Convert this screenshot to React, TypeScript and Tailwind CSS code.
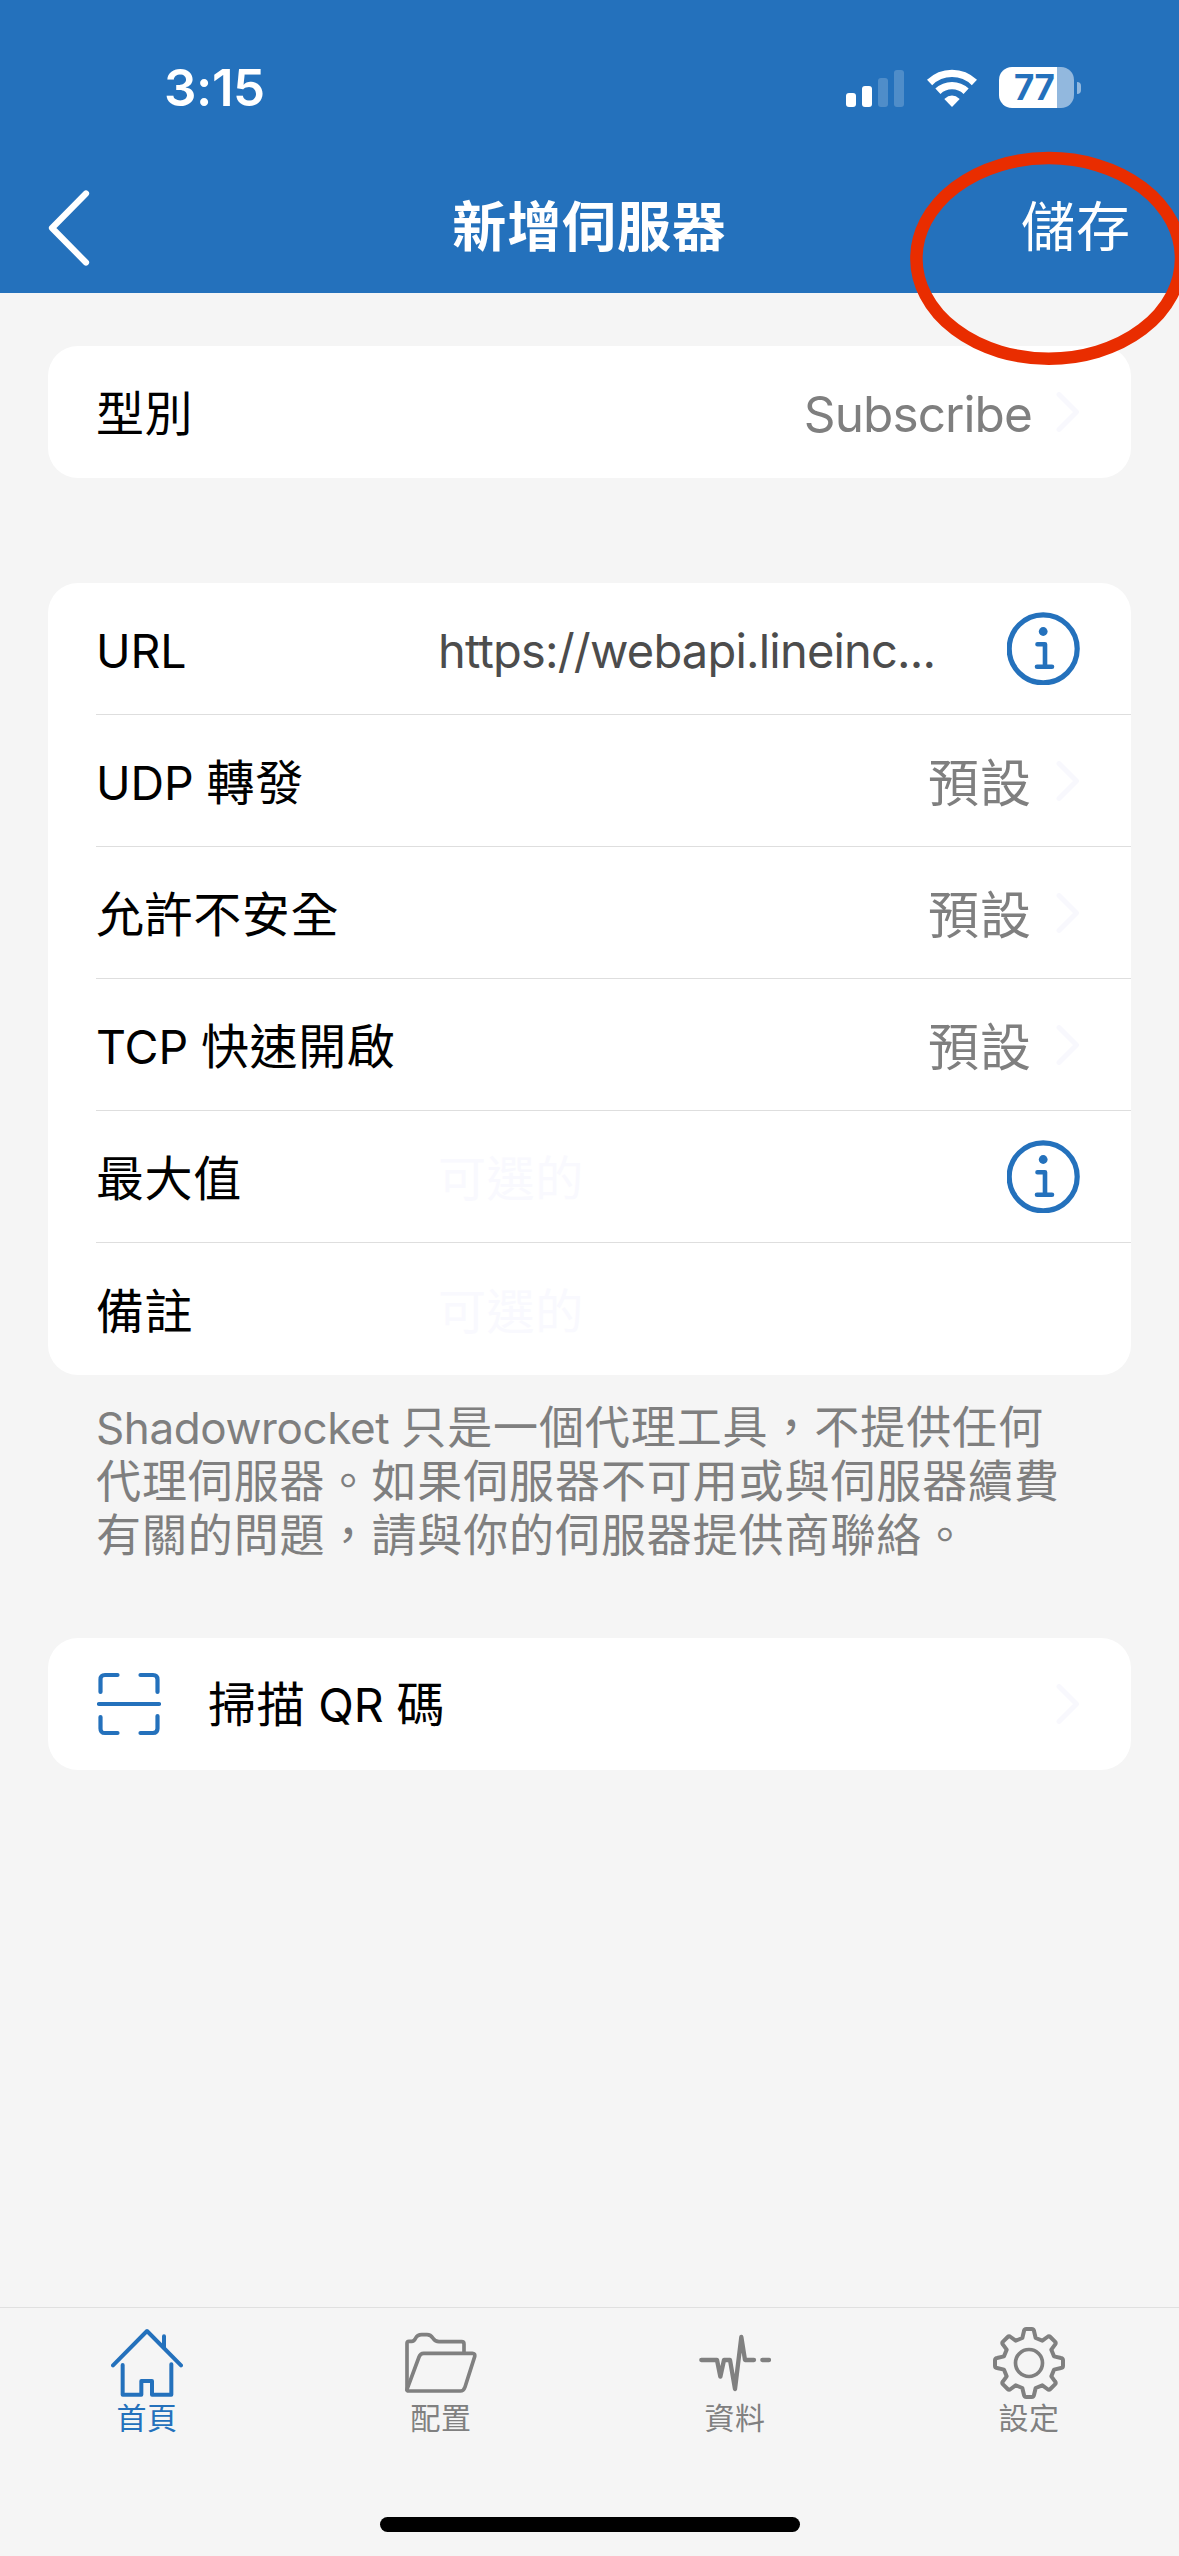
import type { ReactNode } from "react";

// ── Types ──────────────────────────────────────────────────────────────────────

type Accessory = "chevron" | "info" | "none";

type FieldRow = {
  label: ReactNode;
  value?: string;
  placeholder?: string;
  picked?: string;
  accessory: Accessory;
};

// ── Icons ──────────────────────────────────────────────────────────────────────

function ChevronIcon() {
  return (
    <svg className="h-[42px] w-6 shrink-0" viewBox="0 0 24 42" fill="none" stroke="#f8f8fd" strokeWidth="5" strokeLinecap="round" strokeLinejoin="round">
      <path d="M3 3.5 20.5 21 3 38.5" />
    </svg>
  );
}

function InfoIcon() {
  return (
    <svg className="h-[73px] w-[73px] shrink-0" viewBox="0 0 73 73" fill="none" stroke="#2471bc" strokeLinecap="round" strokeLinejoin="round">
      <circle cx="36.2" cy="36.8" r="34" strokeWidth="5.2" />
      <circle cx="36.2" cy="19.5" r="4.4" fill="#2471bc" stroke="none" />
      <path d="M30.5 32.3H38V54.5M30 54.8H45" strokeWidth="4.6" />
    </svg>
  );
}

function ScanIcon() {
  return (
    <svg className="h-16 w-16 shrink-0" viewBox="0 0 64 64" fill="none" stroke="#2471bc" strokeWidth="4.2" strokeLinecap="round">
      <path d="M3.5 20V7.5Q3.5 3 8 3H20.5M43.5 3H56Q60.5 3 60.5 7.5V20M60.5 44V56.5Q60.5 61 56 61H43.5M20.5 61H8Q3.5 61 3.5 56.5V45" />
      <path d="M2 32H62" />
    </svg>
  );
}

function TabIcon({ children }: { children: ReactNode }) {
  return (
    <svg className="h-[72px] w-[72px]" viewBox="0 0 216 216" fill="none" stroke="currentColor" strokeWidth="12" strokeLinecap="round" strokeLinejoin="round">
      {children}
    </svg>
  );
}

// ── Data ───────────────────────────────────────────────────────────────────────

function Latin({ children }: { children: ReactNode }) {
  return <span className="text-[46.5px] tracking-[-0.1px]">{children}</span>;
}

const fields: FieldRow[] = [
  { label: <Latin>URL</Latin>, value: "https://webapi.lineinc...", accessory: "info" },
  { label: <><Latin>UDP </Latin>轉發</>, picked: "預設", accessory: "chevron" },
  { label: "允許不安全", picked: "預設", accessory: "chevron" },
  { label: <><Latin>TCP </Latin>快速開啟</>, picked: "預設", accessory: "chevron" },
  { label: "最大值", placeholder: "可選的", accessory: "info" },
  { label: "備註", placeholder: "可選的", accessory: "none" },
];

const tabs = [
  {
    name: "首頁",
    active: true,
    icon: <path d="M6 115 108 12 210 115M159 28V64M35 114V203H91V162H123V203H181V112" />,
  },
  {
    name: "配置",
    active: false,
    icon: (
      <>
        <path d="M6 187V49q0-6 6-6h8c16 0 6-20 30-20h16c22 0 14 21 36 21h68q7 0 7 7V76" strokeWidth="11" />
        <path d="M6 187 42 90q4-11 14-11H202q9 0 7 10L180 180q-4 12-14 12H12q-8 0-6-5Z" strokeWidth="11" />
      </>
    ),
  },
  {
    name: "資料",
    active: false,
    icon: <path d="M7 99H54L64 149 75 99H93L108 186 127 30 138 99H165M190 99H210" strokeWidth="13" />,
  },
  {
    name: "設定",
    active: false,
    icon: (
      <>
        <path d="M88 33 93 12Q94 6 100 6H116Q122 6 123 12L128 33 148 41 163 30Q168 26 172 30L186 44Q190 48 186 53L175 68 183 88 204 93Q210 94 210 100V116Q210 122 204 123L183 128 175 148 186 163Q190 168 186 172L172 186Q168 190 163 186L148 175 128 183 123 204Q122 210 116 210H100Q94 210 93 204L88 183 68 175 53 186Q48 190 44 186L30 172Q26 168 30 163L41 148 33 128 12 123Q6 122 6 116V100Q6 94 12 93L33 88 41 68 30 53Q26 48 30 44L44 30Q48 26 53 30L68 41Z" />
        <circle cx="108" cy="108" r="40.5" strokeWidth="11" />
      </>
    ),
  },
];

// ── Header ─────────────────────────────────────────────────────────────────────

function StatusBar() {
  return (
    <div className="flex h-[175px] items-center justify-between pr-[98px] pl-[164px]">
      <div className="text-[51px] leading-none font-semibold tracking-[-0.4px]">3:15</div>
      <div className="flex items-center">
        <svg className="h-[38px] w-[58px]" viewBox="0 0 58 38" fill="white">
          <rect x="0" y="24" width="10" height="14" rx="3" />
          <rect x="16" y="17" width="10" height="21" rx="3" />
          <rect x="32" y="9" width="10" height="29" rx="3" opacity="0.2" />
          <rect x="48" y="1" width="10" height="37" rx="3" opacity="0.2" />
        </svg>
        <svg className="ml-[23px] h-[38px] w-[50px]" viewBox="0 0 50 38" fill="none" stroke="white" strokeWidth="7.4">
          <path d="M2.6 13.5A32 32 0 0 1 47.4 13.5" />
          <path d="M10.9 22.2A20.5 20.5 0 0 1 39.1 22.2" />
          <path d="M25 38 17.3 30Q25 23.2 32.7 30Z" fill="white" stroke="none" />
        </svg>
        <div className="ml-[22px] flex h-[41px] w-[75px] items-center overflow-hidden rounded-[13px] bg-[linear-gradient(90deg,#fff_58px,#92b8de_58px)] pl-[15px]">
          <span className="text-[35px] leading-none font-bold tracking-[-0.5px] text-[#2471bc]">77</span>
        </div>
        <div className="ml-[3px] h-3 w-1 rounded-r-full bg-[#92b8de]" />
      </div>
    </div>
  );
}

function NavBar() {
  return (
    <div className="grid h-[106px] grid-cols-3 items-center px-12">
      <svg className="h-[76px] w-[42px]" viewBox="0 0 42 76" fill="none" stroke="white" strokeWidth="6.2" strokeLinecap="round" strokeLinejoin="round">
        <path d="M38 3.5 4 38 38 72.5" />
      </svg>
      <h1 className="text-center text-[54px] leading-none font-bold tracking-[0.9px]">新增伺服器</h1>
      <div className="text-right text-[54px] leading-none tracking-[1px]">儲存</div>
    </div>
  );
}

// ── Form ───────────────────────────────────────────────────────────────────────

function Card({ children }: { children: ReactNode }) {
  return <section className="mx-12 rounded-[30px] bg-white">{children}</section>;
}

function Row({ row, last }: { row: FieldRow; last: boolean }) {
  return (
    <div className={`ml-12 flex h-[132px] items-center border-[#dedede] pr-[51px] ${last ? "" : "border-b"}`}>
      <div className="w-[342px] shrink-0 pt-[5px] whitespace-nowrap">{row.label}</div>
      <div className="flex-1 pt-[5px] whitespace-nowrap">
        {row.value && <span className="text-[47px] tracking-[-0.8px] text-[#4c4c4c]">{row.value}</span>}
        {row.placeholder && <span className="text-[#f9f9fe]">{row.placeholder}</span>}
      </div>
      {row.picked && <div className="mr-[24px] pt-[6px] text-[51px] tracking-[1px] text-[#7f7f7f]">{row.picked}</div>}
      {row.accessory === "chevron" && <ChevronIcon />}
      {row.accessory === "info" && <InfoIcon />}
    </div>
  );
}

export default function App() {
  return (
    <div
      lang="zh-Hant"
      className="relative flex h-[2556px] w-[1179px] flex-col overflow-hidden bg-[#f5f5f5] font-[Inter,'Noto_Sans_CJK_TC',sans-serif] text-5xl leading-none tracking-[0.6px] text-black"
    >
      <header className="h-[293px] bg-[#2471bc] text-white">
        <StatusBar />
        <NavBar />
      </header>

      <main className="flex flex-1 flex-col pt-[53px]">
        <Card>
          <div className="flex h-[132px] items-center pr-[51px] pl-12">
            <div className="flex-1 pt-[4px]">型別</div>
            <div className="mr-[24px] pt-[5px] text-[49.5px] tracking-[-0.9px] text-[#7f7f7f]">Subscribe</div>
            <ChevronIcon />
          </div>
        </Card>

        <div className="mt-[105px]">
          <Card>
            {fields.map((row, i) => (
              <Row key={i} row={row} last={i === fields.length - 1} />
            ))}
          </Card>
        </div>

        <p className="mt-[26px] ml-24 text-[45px] leading-[54px] tracking-[0.9px] whitespace-nowrap text-[#7f7f7f]">
          <span className="text-[44px] tracking-[-0.4px]">Shadowrocket </span>只是一個代理工具，不提供任何
          <br />
          代理伺服器。如果伺服器不可用或與伺服器續費
          <br />
          有關的問題，請與你的伺服器提供商聯絡。
        </p>

        <div className="mt-[75px]">
          <Card>
            <div className="flex h-[132px] items-center pr-[51px] pl-[49px]">
              <ScanIcon />
              <div className="ml-[47px] flex-1 pt-px">
                掃描<Latin> QR </Latin>碼
              </div>
              <ChevronIcon />
            </div>
          </Card>
        </div>
      </main>

      <nav className="h-[249px] border-t border-[#e0e0e0]">
        <div className="grid grid-cols-4 pr-[3px] pt-[19px]">
          {tabs.map((tab) => (
            <div key={tab.name} className={`flex flex-col items-center ${tab.active ? "text-[#2471bc]" : "text-[#808080]"}`}>
              <TabIcon>{tab.icon}</TabIcon>
              <span className="mt-1 text-[30px] leading-[30px] tracking-[0.4px]">{tab.name}</span>
            </div>
          ))}
        </div>
        <div className="mx-auto mt-[84px] h-[15px] w-[420px] rounded-full bg-black" />
      </nav>

      {/* Marker ring around the save button */}
      <svg className="absolute top-[151px] left-[909px] h-[216px] w-[270px]" viewBox="0 0 270 216" fill="none">
        <ellipse cx="139.7" cy="107.4" rx="132.3" ry="100.3" stroke="#e92d00" strokeWidth="12.5" />
      </svg>
    </div>
  );
}
